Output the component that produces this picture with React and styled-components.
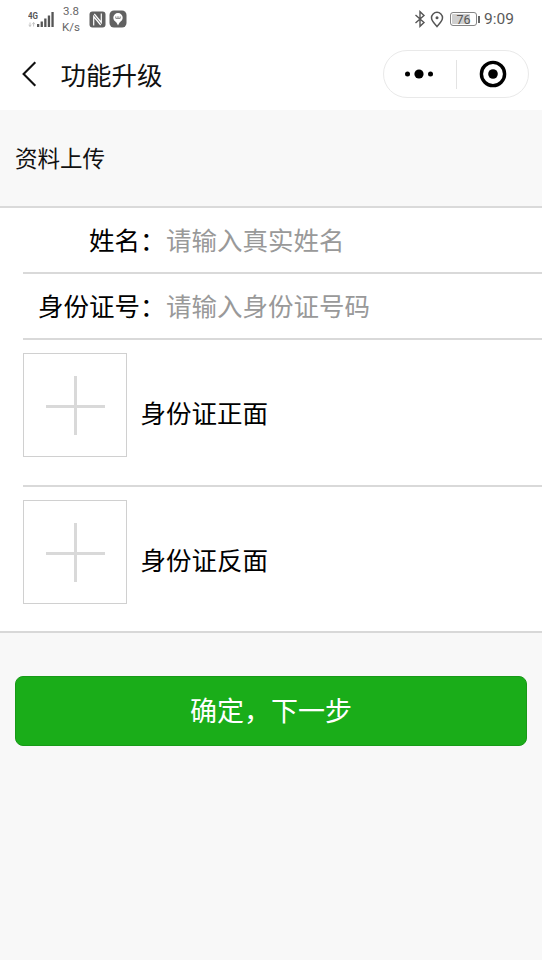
import React, { useState } from "react";
import styled, { createGlobalStyle } from "styled-components";

const uploadList = [
    { id: "front", label: "身份证正面" },
    { id: "back", label: "身份证反面" },
];

const SignalIcon = () => (
    <svg width="27" height="18" viewBox="0 0 27 18">
        <text x="0" y="8.5" fontSize="9" fontWeight="700" fontFamily="Roboto, sans-serif" fill="#555" textLength="10" lengthAdjust="spacingAndGlyphs">
            4G
        </text>
        <path d="M2 12.5v4M0.8 14.8l1.2 1.7 1.2-1.7M5.6 16.5v-4M4.4 14.2l1.2-1.7 1.2 1.7" stroke="#c4c4c4" fill="none" />
        <g fill="#555">
            <rect x="9" y="14" width="2.3" height="3" />
            <rect x="12.6" y="11.5" width="2.3" height="5.5" />
            <rect x="16.2" y="8.5" width="2.3" height="8.5" />
            <rect x="19.8" y="5.5" width="2.3" height="11.5" />
            <rect x="23.4" y="2" width="2.3" height="15" />
        </g>
    </svg>
);

const NfcIcon = () => (
    <svg width="17" height="17" viewBox="0 0 17 17">
        <rect x="0.5" y="0.5" width="16" height="16" rx="3" fill="#616161" />
        <path d="M4.7 14.5V5.5l7 8.500M12.300 2.500v9l-7-8.500" stroke="#fff" strokeWidth="1.2" fill="none" />
    </svg>
);

const BulbIcon = () => (
    <svg width="18" height="18" viewBox="0 0 18 18">
        <rect x="0.5" y="0.5" width="17" height="17" rx="4.5" fill="#616161" />
        <path d="M9 3a4.7 4.7 0 0 0-4.7 4.7c0 2.3 1.6 3.3 2.7 4.5h4c1.1-1.2 2.7-2.2 2.7-4.5A4.7 4.7 0 0 0 9 3z" fill="#fff" />
        <path d="M7.2 12h3.6L9 15.6z" fill="#fff" />
        <path d="M6.8 6.4v2h4.4v-2M9 6.2v2" stroke="#777" strokeWidth="0.9" fill="none" />
    </svg>
);

const BluetoothIcon = () => (
    <svg width="12" height="18" viewBox="0 0 12 18">
        <path d="M1.5 5l8.5 7.5-4 3.8V1.7l4 3.8L1.5 13" stroke="#555" strokeWidth="1.4" fill="none" />
    </svg>
);

const LocationIcon = () => (
    <svg width="14" height="17" viewBox="0 0 14 17">
        <path d="M7 15.5C5.5 13.7 1.5 10.3 1.5 6.8a5.5 5.5 0 0 1 11 0c0 3.5-4 6.9-5.5 8.7z" stroke="#555" strokeWidth="1.5" fill="none" />
        <circle cx="7" cy="6.7" r="1.5" fill="#555" />
    </svg>
);

const BackIcon = () => (
    <svg width="16" height="28" viewBox="0 0 16 28">
        <path d="M14.3 2.2L2.6 14l11.7 11.8" stroke="#111" strokeWidth="2.1" fill="none" />
    </svg>
);

const MoreIcon = () => (
    <svg width="30" height="12" viewBox="0 0 30 12">
        <circle cx="3.5" cy="6" r="2.5" />
        <circle cx="15" cy="6" r="4.6" />
        <circle cx="26.5" cy="6" r="2.5" />
    </svg>
);

const CloseIcon = () => (
    <svg width="28" height="28" viewBox="0 0 28 28">
        <circle cx="14" cy="14" r="11.6" fill="none" stroke="#000" strokeWidth="3.4" />
        <circle cx="14" cy="14" r="4.8" />
    </svg>
);

const App = () => {
    const [name, setName] = useState("");
    const [idNumber, setIdNumber] = useState("");

    return (
        <>
            <GlobalStyle />
            <Page>
                <StatusBar>
                    <StatusLeft>
                        <SignalIcon />
                        <NetSpeed>
                            <span>3.8</span>
                            <span>K/s</span>
                        </NetSpeed>
                        <NfcIcon />
                        <BulbIcon />
                    </StatusLeft>
                    <StatusRight>
                        <BluetoothIcon />
                        <LocationIcon />
                        <Battery>76</Battery>
                        <Clock>9:09</Clock>
                    </StatusRight>
                </StatusBar>
                <NavBar>
                    <BackButton aria-label="返回">
                        <BackIcon />
                    </BackButton>
                    <NavTitle>功能升级</NavTitle>
                    <Capsule>
                        <CapsuleButton $padding="0 2px 0 0">
                            <MoreIcon />
                        </CapsuleButton>
                        <CapsuleLine />
                        <CapsuleButton $padding="0 0 0 2px">
                            <CloseIcon />
                        </CapsuleButton>
                    </Capsule>
                </NavBar>
                <SectionTitle>资料上传</SectionTitle>
                <FormGroup>
                    <InputRow>
                        <Label>姓名：</Label>
                        <Input placeholder="请输入真实姓名" value={name} onChange={(e) => setName(e.target.value)} />
                    </InputRow>
                    <InputRow>
                        <Label>身份证号：</Label>
                        <Input placeholder="请输入身份证号码" value={idNumber} onChange={(e) => setIdNumber(e.target.value)} />
                    </InputRow>
                    {uploadList.map(({ id, label }) => (
                        <UploadRow key={id}>
                            <UploadBox aria-label={label} />
                            <UploadText>{label}</UploadText>
                        </UploadRow>
                    ))}
                </FormGroup>
                <SubmitButton>确定，下一步</SubmitButton>
            </Page>
        </>
    );
};

export default App;

const GlobalStyle = createGlobalStyle`
    * {
        box-sizing: border-box;
    }

    body {
        margin: 0;
        background-color: #f8f8f8;
    }

    button, input {
        font-family: inherit;
        border: none;
        padding: 0;
        background: none;
        outline: none;
    }

    svg {
        display: block;
        flex-shrink: 0;
    }
`;

const Page = styled.div`
    display: flex;
    flex-direction: column;
    width: 100%;
    min-height: 100vh;
    background-color: #f8f8f8;
    font-family: "Noto Sans CJK SC", sans-serif;
    color: #000;
`;

const StatusBar = styled.div`
    display: flex;
    justify-content: space-between;
    height: 38px;
    padding: 0 28px;
    background-color: #fff;
    font-family: Roboto, sans-serif;
    color: #666;
`;

const StatusLeft = styled.div`
    display: flex;
    align-items: center;
    gap: 3px;
`;

const NetSpeed = styled.div`
    display: flex;
    flex-direction: column;
    align-items: center;
    width: 26px;
    margin-right: 2px;
    font-size: 11.5px;
    line-height: 16px;
`;

const StatusRight = styled.div`
    display: flex;
    align-items: center;
    gap: 4px;
`;

const Battery = styled.div`
    position: relative;
    width: 27px;
    height: 14px;
    margin-left: 2px;
    border: 1px solid #858585;
    border-radius: 3px;
    background: linear-gradient(to right, #cfcfcf 76%, #fff 76%);
    box-shadow: inset 0 0 0 1px #fff;
    font-size: 12.5px;
    line-height: 13px;
    text-align: center;
    color: #555;

    &::after {
        content: "";
        position: absolute;
        top: 3px;
        right: -4px;
        width: 2px;
        height: 7px;
        background-color: #666;
    }
`;

const Clock = styled.span`
    margin-left: 3px;
    font-size: 15.5px;
    line-height: 20px;
    color: #5a5a5a;
`;

const NavBar = styled.header`
    display: flex;
    align-items: center;
    height: 72px;
    padding: 0 13px 0 21px;
    background-color: #fff;
`;

const BackButton = styled.button`
    width: 39.5px;
`;

const NavTitle = styled.h1`
    flex: 1;
    margin: 0;
    font-size: 25.5px;
    font-weight: 400;
    line-height: 36px;
    color: #111;
`;

const Capsule = styled.div`
    display: flex;
    align-items: center;
    width: 146px;
    height: 48px;
    border: 1px solid #e9e9e9;
    border-radius: 24px;
`;

const CapsuleButton = styled.button`
    display: flex;
    flex: 1;
    justify-content: center;
    align-items: center;
    padding: ${(props) => props.$padding};
`;

const CapsuleLine = styled.span`
    width: 1px;
    height: 29px;
    background-color: #e3e3e3;
`;

const SectionTitle = styled.h2`
    height: 96px;
    margin: 0;
    padding-left: 15px;
    font-size: 22.5px;
    font-weight: 400;
    line-height: 94px;
    color: #111;
`;

const FormGroup = styled.div`
    padding-left: 23px;
    background-color: #fff;
    border-top: 2px solid #dadada;
    border-bottom: 2px solid #d8d8d8;
`;

const InputRow = styled.div`
    display: flex;
    align-items: center;
    height: 66px;
    padding-bottom: 2px;
    border-bottom: 2px solid #d9d9d9;
`;

const Label = styled.label`
    width: 143px;
    padding-right: 0.5px;
    font-size: 25.5px;
    line-height: 36px;
    text-align: right;
    white-space: nowrap;
`;

const Input = styled.input`
    flex: 1;
    min-width: 0;
    height: 40px;
    padding-bottom: 2px;
    font-size: 25.5px;

    &::placeholder {
        color: #999;
    }
`;

const UploadRow = styled.div`
    display: flex;
    align-items: center;
    gap: 13.5px;
    height: 147px;
    padding-bottom: 15px;

    & + & {
        height: 144px;
        padding-bottom: 14px;
    }

    &:not(:last-child) {
        border-bottom: 2px solid #d9d9d9;
    }
`;

const UploadBox = styled.button`
    width: 104px;
    height: 104px;
    border: 1px solid #d0d0d0;
    background: linear-gradient(#d9d9d9, #d9d9d9) 22px 51px / 59px 3px no-repeat,
        linear-gradient(#d9d9d9, #d9d9d9) 50px 22px / 3px 59px no-repeat;
`;

const UploadText = styled.p`
    margin: 14px 0 0;
    font-size: 25.5px;
    line-height: 36px;
`;

const SubmitButton = styled.button`
    height: 70px;
    margin: 43px 15px 0;
    padding-bottom: 2px;
    border: 1px solid #189a18;
    border-radius: 8px;
    background-color: #1aad19;
    font-size: 27px;
    line-height: 66px;
    color: #fff;
`;
